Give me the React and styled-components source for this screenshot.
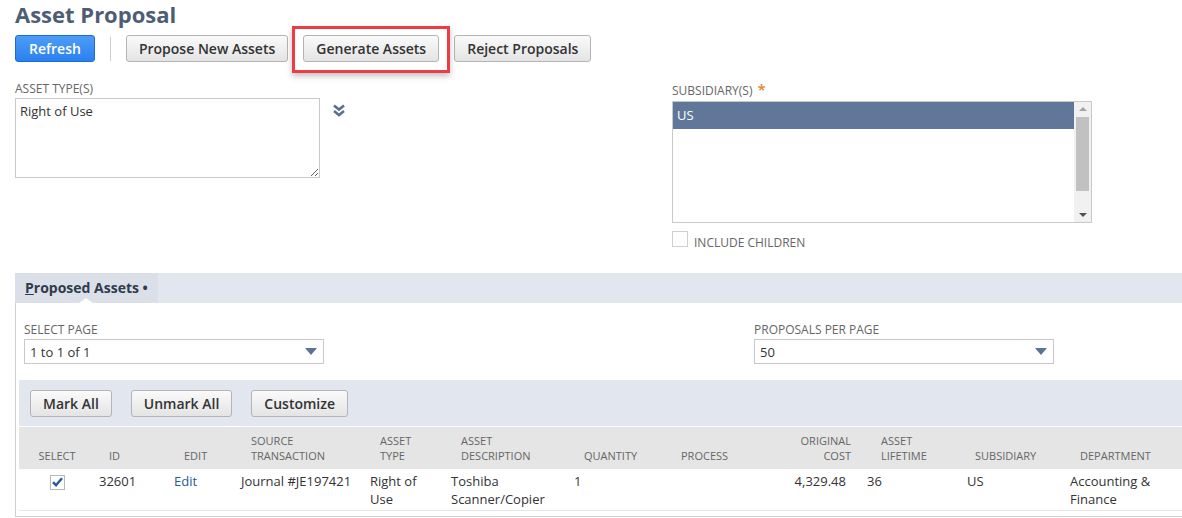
import React from 'react';
import styled, { createGlobalStyle, css } from 'styled-components';

const GlobalStyle = createGlobalStyle`
  html, body {
    margin: 0;
    padding: 0;
    background: #fff;
    overflow: hidden;
  }
  body {
    font-family: "Open Sans", "Liberation Sans", sans-serif;
    color: #333;
  }
`;

const Page = styled.div`
  width: 1205px;
  padding-left: 15px;
`;

const Title = styled.h1`
  margin: 0;
  font-size: 22px;
  line-height: 28px;
  font-weight: 700;
  color: #4d5d75;
`;

const Toolbar = styled.div`
  display: flex;
  align-items: center;
  gap: 15px;
  margin-top: 7px;
  height: 27px;
`;

const Button = styled.button`
  height: 27px;
  padding: 0 12px;
  border-radius: 3px;
  font-family: inherit;
  font-size: 14px;
  font-weight: 600;
  line-height: 25px;
  cursor: pointer;
  white-space: nowrap;
  ${({ $primary }) =>
    $primary
      ? css`
          color: #fff;
          border: 1px solid #1f6ad6;
          background: linear-gradient(#4d9df7, #2a80ee);
          padding: 0 13px;
        `
      : css`
          color: #333;
          border: 1px solid #b4b4b4;
          background: linear-gradient(#fafafa, #e4e4e4);
        `}
`;

const Divider = styled.span`
  width: 1px;
  height: 24px;
  background: #d0d0d0;
`;

const Highlight = styled.span`
  position: relative;
  display: inline-flex;
  &::after {
    content: '';
    position: absolute;
    left: -11px;
    right: -11px;
    top: -9px;
    bottom: -11px;
    border: 3px solid #ec3c44;
    box-shadow: 0 3px 6px rgba(0, 0, 0, 0.25);
    pointer-events: none;
  }
`;

const Fields = styled.div`
  display: grid;
  grid-template-columns: 657px 420px;
  margin-top: 20px;
`;

const Field = styled.div`
  display: flex;
  flex-direction: column;
`;

const Label = styled.div`
  font-size: 12px;
  line-height: 14px;
  color: #666;
  text-transform: uppercase;
  margin-bottom: ${({ $gap }) => ($gap == null ? 2 : $gap)}px;
  white-space: nowrap;
`;

const Required = styled.span`
  color: #e0872b;
  font-size: 15px;
  margin-left: 5px;
  font-weight: 600;
`;

const InlineRow = styled.div`
  display: flex;
  align-items: flex-start;
  gap: 13px;
`;

const TextArea = styled.textarea`
  box-sizing: border-box;
  width: 305px;
  height: 80px;
  margin: 0;
  padding: 3px 4px;
  border: 1px solid #c9c9c9;
  font-family: inherit;
  font-size: 13px;
  line-height: 18px;
  color: #333;
  resize: both;
  outline: none;
`;

const ExpandIcon = styled.svg`
  margin-top: 6px;
  flex: none;
`;

const ListBox = styled.div`
  box-sizing: border-box;
  width: 420px;
  height: 122px;
  border: 1px solid #c9c9c9;
  display: flex;
  background: #fff;
`;

const ListItems = styled.div`
  flex: 1;
`;

const ListItem = styled.div`
  height: 27px;
  line-height: 27px;
  padding-left: 4px;
  font-size: 13px;
  color: ${({ $selected }) => ($selected ? '#fff' : '#333')};
  background: ${({ $selected }) => ($selected ? '#607799' : 'transparent')};
`;

const ScrollTrack = styled.div`
  width: 17px;
  background: #f1f1f1;
  display: flex;
  flex-direction: column;
  align-items: center;
  padding: 5px 0;
  box-sizing: border-box;
`;

const ScrollArrow = styled.div`
  width: 0;
  height: 0;
  border-left: 4px solid transparent;
  border-right: 4px solid transparent;
  ${({ $down }) =>
    $down
      ? css`border-top: 4px solid #505050;`
      : css`border-bottom: 4px solid #a3a3a3;`}
`;

const ScrollThumb = styled.div`
  width: 13px;
  height: 74px;
  margin: 6px 0 auto;
  background: #c1c1c1;
`;

const CheckRow = styled.label`
  display: flex;
  align-items: flex-start;
  gap: 6px;
  height: 16px;
  margin-top: 8px;
  font-size: 12px;
  line-height: 14px;
  color: #666;
  text-transform: uppercase;
`;

const CheckText = styled.span`
  padding-top: 5px;
`;

const CheckBox = styled.span`
  box-sizing: border-box;
  width: ${({ $size }) => $size || 16}px;
  height: ${({ $size }) => $size || 16}px;
  border: 1px solid ${({ $tone }) => $tone || '#cfcfcf'};
  background: #fff;
  display: inline-flex;
  align-items: center;
  justify-content: center;
  flex: none;
`;

const TabBar = styled.div`
  margin-top: 26px;
  height: 30px;
  background: #e1e6ef;
  display: flex;
`;

const Tab = styled.div`
  position: relative;
  padding: 0 10px;
  width: 143px;
  box-sizing: border-box;
  background: #dbe0e8;
  font-size: 14px;
  font-weight: 700;
  line-height: 30px;
  color: #303b4b;
  &::after {
    content: '';
    position: absolute;
    left: 64px;
    bottom: 0;
    border-left: 7px solid transparent;
    border-right: 7px solid transparent;
    border-bottom: 5px solid #fff;
  }
`;

const AccessKey = styled.span`
  text-decoration: underline;
`;

const Panel = styled.div`
  border-left: 1px solid #cfcfcf;
  border-bottom: 1px solid #cfcfcf;
  padding: 20px 0 5px 3px;
  background: #fff;
`;

const SelectsRow = styled.div`
  display: grid;
  grid-template-columns: 730px 300px;
  padding-left: 5px;
`;

const Select = styled.div`
  box-sizing: border-box;
  width: 300px;
  height: 25px;
  border: 1px solid #c9c9c9;
  display: flex;
  align-items: center;
  justify-content: space-between;
  padding: 0 6px 0 5px;
  font-size: 13px;
  color: #333;
  &::after {
    content: '';
    border-left: 6px solid transparent;
    border-right: 6px solid transparent;
    border-top: 7px solid #5c7293;
  }
`;

const ButtonBar = styled.div`
  margin-top: 16px;
  height: 46px;
  background: #e1e6ef;
  display: flex;
  align-items: center;
  gap: 19px;
  padding-left: 11px;
`;

const Table = styled.table`
  border-collapse: collapse;
  table-layout: fixed;
  width: 1181px;
  border-top: 1px solid #fff;
`;

const HeadCell = styled.th`
  background: #e5e5e5;
  height: 42px;
  box-sizing: border-box;
  padding: 0 ${({ $padRight }) => $padRight || 0}px 6px ${({ $pad }) => ($pad == null ? 14 : $pad)}px;
  vertical-align: bottom;
  text-align: ${({ $align }) => $align || 'left'};
  font-size: 11px;
  line-height: 15px;
  font-weight: 400;
  color: #666;
  text-transform: uppercase;
`;

const Cell = styled.td`
  height: 41px;
  box-sizing: border-box;
  padding: 3px ${({ $padRight }) => $padRight || 0}px 2px 4px;
  vertical-align: top;
  text-align: ${({ $align }) => $align || 'left'};
  font-size: 13px;
  line-height: 18px;
  color: #333;
  border-bottom: 1px solid #e6e6e6;
`;

const EditLink = styled.a`
  color: #245a96;
  text-decoration: none;
`;

const CellCheck = styled.div`
  display: flex;
  justify-content: center;
  padding: 3px 3px 0 0;
`;

const columns = [76, 75, 67, 129, 81, 123, 97, 95, 101, 100, 103, 134];

const DoubleChevron = () => (
  <ExpandIcon width="12" height="13" viewBox="0 0 12 13">
    <path d="M1 1.5 L6 5.5 L11 1.5" fill="none" stroke="#5b6f8e" strokeWidth="2.6" />
    <path d="M1 7 L6 11 L11 7" fill="none" stroke="#5b6f8e" strokeWidth="2.6" />
  </ExpandIcon>
);

const CheckMark = () => (
  <svg width="11" height="10" viewBox="0 0 11 10">
    <path d="M1 5.2 L4 8.2 L10 1.2" fill="none" stroke="#28589f" strokeWidth="2.4" />
  </svg>
);

export default function App() {
  return (
    <>
      <GlobalStyle />
      <Page>
        <Title>Asset Proposal</Title>
        <Toolbar>
          <Button $primary>Refresh</Button>
          <Divider />
          <Button>Propose New Assets</Button>
          <Highlight>
            <Button>Generate Assets</Button>
          </Highlight>
          <Button>Reject Proposals</Button>
        </Toolbar>

        <Fields>
          <Field>
            <Label>Asset Type(s)</Label>
            <InlineRow>
              <TextArea readOnly defaultValue="Right of Use" />
              <DoubleChevron />
            </InlineRow>
          </Field>
          <Field>
            <Label $gap={3}>
              Subsidiary(s)<Required>*</Required>
            </Label>
            <ListBox>
              <ListItems>
                <ListItem $selected>US</ListItem>
              </ListItems>
              <ScrollTrack>
                <ScrollArrow />
                <ScrollThumb />
                <ScrollArrow $down />
              </ScrollTrack>
            </ListBox>
            <CheckRow>
              <CheckBox />
              <CheckText>Include Children</CheckText>
            </CheckRow>
          </Field>
        </Fields>

        <TabBar>
          <Tab>
            <AccessKey>P</AccessKey>roposed Assets •
          </Tab>
        </TabBar>

        <Panel>
          <SelectsRow>
            <Field>
              <Label>Select Page</Label>
              <Select>1 to 1 of 1</Select>
            </Field>
            <Field>
              <Label>Proposals Per Page</Label>
              <Select>50</Select>
            </Field>
          </SelectsRow>

          <ButtonBar>
            <Button>Mark All</Button>
            <Button>Unmark All</Button>
            <Button>Customize</Button>
          </ButtonBar>

          <Table>
            <colgroup>
              {columns.map((w, i) => (
                <col key={i} style={{ width: w }} />
              ))}
            </colgroup>
            <thead>
              <tr>
                <HeadCell $pad={0} $align="center">Select</HeadCell>
                <HeadCell>ID</HeadCell>
                <HeadCell>Edit</HeadCell>
                <HeadCell>Source<br />Transaction</HeadCell>
                <HeadCell>Asset<br />Type</HeadCell>
                <HeadCell>Asset<br />Description</HeadCell>
                <HeadCell>Quantity</HeadCell>
                <HeadCell>Process</HeadCell>
                <HeadCell $align="right" $padRight={12}>Original<br />Cost</HeadCell>
                <HeadCell $pad={18}>Asset<br />Lifetime</HeadCell>
                <HeadCell $pad={12}>Subsidiary</HeadCell>
                <HeadCell>Department</HeadCell>
              </tr>
            </thead>
            <tbody>
              <tr>
                <Cell>
                  <CellCheck>
                    <CheckBox $size={15} $tone="#b8b8b8">
                      <CheckMark />
                    </CheckBox>
                  </CellCheck>
                </Cell>
                <Cell>32601</Cell>
                <Cell><EditLink href="#">Edit</EditLink></Cell>
                <Cell>Journal #JE197421</Cell>
                <Cell>Right of<br />Use</Cell>
                <Cell>Toshiba<br />Scanner/Copier</Cell>
                <Cell>1</Cell>
                <Cell></Cell>
                <Cell $align="right" $padRight={17}>4,329.48</Cell>
                <Cell>36</Cell>
                <Cell>US</Cell>
                <Cell>Accounting &amp;<br />Finance</Cell>
              </tr>
            </tbody>
          </Table>
        </Panel>
      </Page>
    </>
  );
}
